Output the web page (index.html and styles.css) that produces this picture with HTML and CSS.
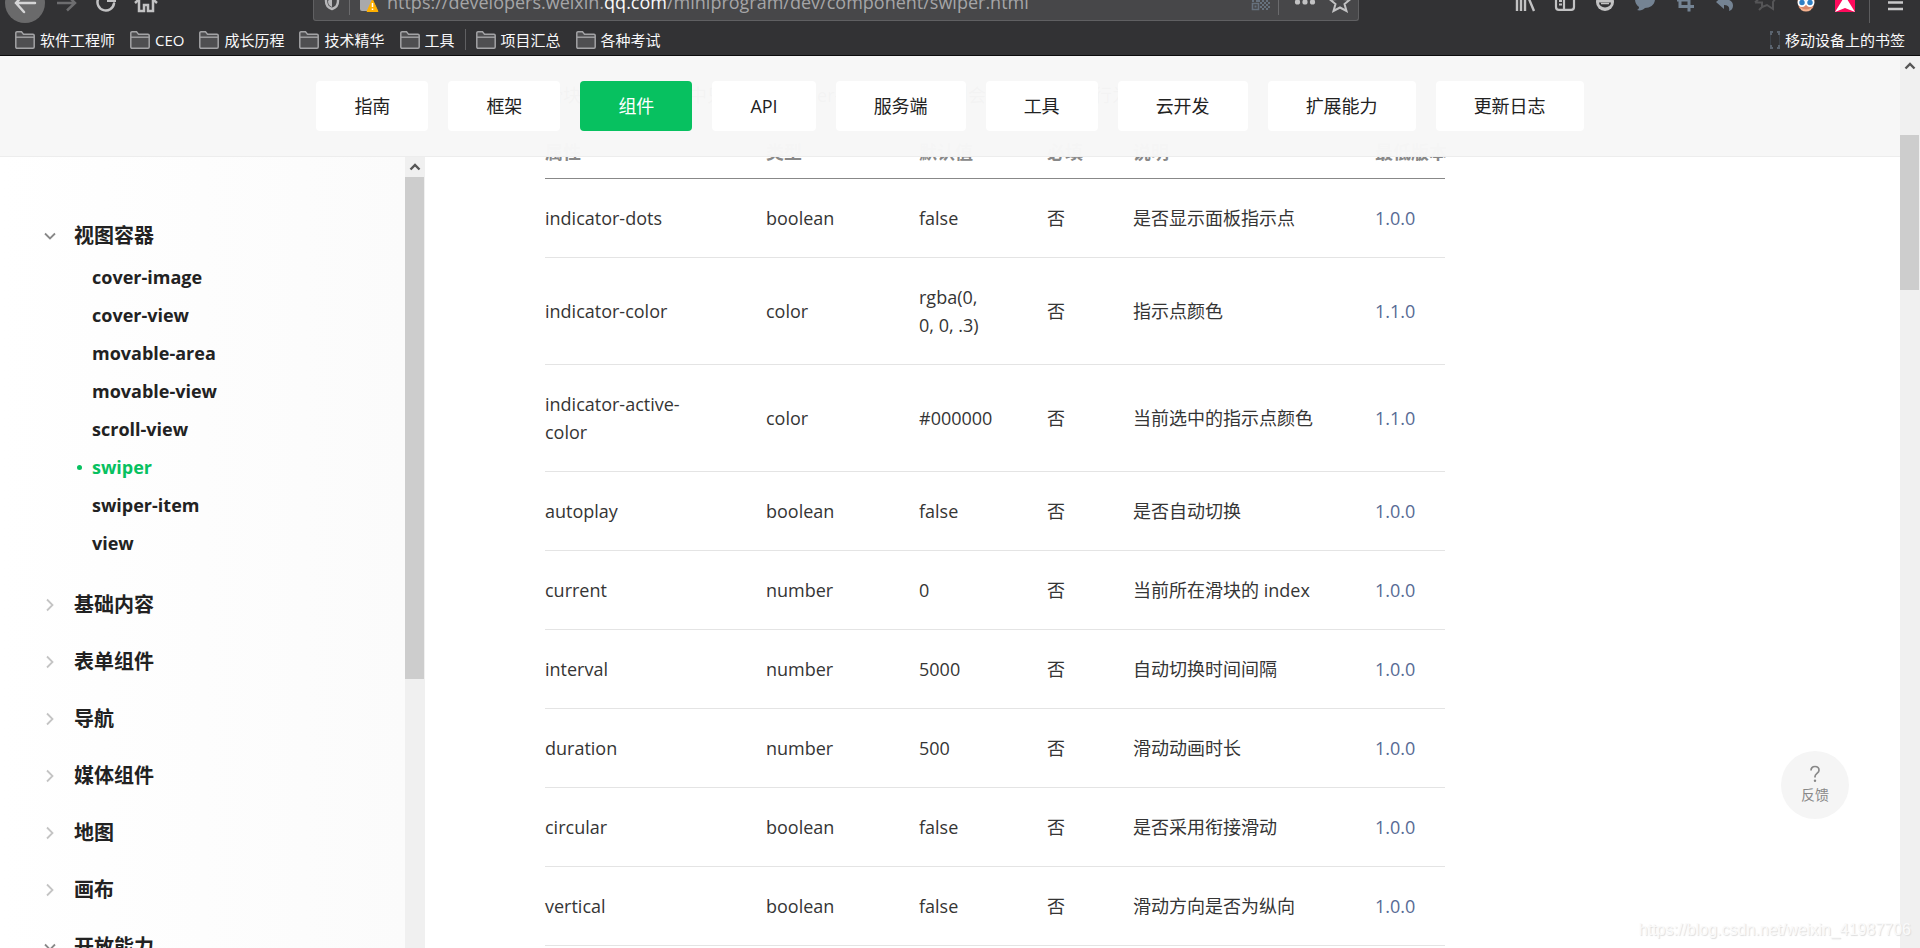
FILE: index.html
```html
<!DOCTYPE html>
<html lang="zh-CN">
    <head>
        <meta charset="utf-8">
        <title>swiper | 微信开放文档</title>
        <link rel="stylesheet" href="styles.css">
    </head>
    <body>
        <svg class="defs" width="0" height="0">
            <symbol id="folder" viewBox="0 0 20 18">
                <path d="M.8 3.5V2A1.2 1.2 0 0 1 2 .8h4.5l2 2.4H18a1.2 1.2 0 0 1 1.2 1.2V16a1.2 1.2 0 0 1-1.2 1.2H2A1.2 1.2 0 0 1 .8 16z" fill="#4f4f51" stroke="#a3a3a5" stroke-width="1.5"/>
                <path d="M1 6.2h18" stroke="#a3a3a5" stroke-width="1.4"/>
            </symbol>
            <symbol id="down" viewBox="0 0 14 14">
                <path d="M2 4.5l5 5 5-5" fill="none" stroke="#888" stroke-width="1.8"/>
            </symbol>
            <symbol id="right" viewBox="0 0 14 14">
                <path d="M4 1.5L9.500 7 4 12.500" fill="none" stroke="#c4c4c4" stroke-width="1.8"/>
            </symbol>
            <symbol id="up" viewBox="0 0 20 20">
                <path d="M5.500 12.500L10 8l4.500 4.500" fill="none" stroke="#555" stroke-width="2.400"/>
            </symbol>
        </svg>

        <header class="browser">
            <div class="toolbar">
                <button class="tool" aria-label="后退"><svg viewBox="0 0 40 24"><circle cx="20" cy="3" r="20" fill="#6a6a6b"/><path d="M30 3H11M19-6l-8 9 8 9" fill="none" stroke="#d5d5d6" stroke-width="2.500" stroke-linecap="round"/></svg></button>
                <button class="tool" aria-label="前进"><svg viewBox="0 0 40 24"><path d="M12 3h18M22-5l8 8-8 7.500" fill="none" stroke="#6d6d6f" stroke-width="2.500"/></svg></button>
                <button class="tool" aria-label="刷新"><svg viewBox="0 0 40 24"><path d="M29 3.500A8.300 8.300 0 1 1 25-5" fill="none" stroke="#c2c2c3" stroke-width="2.500" stroke-linecap="round"/><path d="M22-1h9v3h-9z" fill="#c2c2c3"/></svg></button>
                <button class="tool" aria-label="主页"><svg viewBox="0 0 40 24"><path d="M10 3l11-10L32 3" fill="none" stroke="#c2c2c3" stroke-width="2.500"/><path d="M14 0v11h5V5h4v6h5V0" fill="none" stroke="#c2c2c3" stroke-width="2.500"/></svg></button>
                <div class="urlbar">
                    <svg class="url-left" viewBox="0 0 66 20">
                        <path d="M12-6v7c0 4 2.500 7 6 8 3.500-1 6-4 6-8v-7" fill="none" stroke="#b8b8ba" stroke-width="2.400"/>
                        <path d="M18-4V7c-3-1-4-3-4-6" fill="#b8b8ba"/>
                        <path d="M35.500 0v15" stroke="#6b6b6d"/>
                        <path d="M46 0h12v11H48a2 2 0 0 1-2-2z" fill="#a9a9ab"/>
                        <path d="M58.500-.5L64 11.500H53z" fill="#ffb000" stroke="#ffb000" stroke-linejoin="round"/>
                        <path d="M58.500 3v4M58.500 8.500v1.500" stroke="#fff" stroke-width="1.500"/>
                    </svg>
                    <div class="url">https://developers.weixin.<b>qq.com</b>/miniprogram/dev/component/swiper.html</div>
                    <svg class="url-right" viewBox="0 0 110 20">
                        <path d="M4.500 3.500h6v6h-6z" fill="none" stroke="#66717d" stroke-width="1.600"/>
                        <path d="M6.500 5.500h2v2h-2zM4 0h2v2H4zM8 0h4v2H8zM12 2h2v2h-2zM14 0h2v2h-2zM16 2h2v2h-2zM18 0h2v2h-2zM20 2h2v2h-2zM14 4h2v2h-2zM18 4h2v2h-2zM12 6h2v2h-2zM16 6h2v2h-2zM20 6h2v2h-2zM14 8h2v2h-2zM18 8h2v2h-2z" fill="#66717d"/>
                        <path d="M30.500 0v15" stroke="#6b6b6d"/>
                        <circle cx="49.500" cy="2" r="2.600" fill="#c2c2c3"/><circle cx="57" cy="2" r="2.600" fill="#c2c2c3"/><circle cx="64.500" cy="2" r="2.600" fill="#c2c2c3"/>
                        <path d="M92-8l3 7 7 .5-5.500 4.500 2 7L92 7.500 85.500 11l2-7L82-.5l7-.5z" fill="none" stroke="#c2c2c3" stroke-width="2"/>
                    </svg>
                </div>
                <button class="tool" aria-label="书库"><svg viewBox="0 0 40 24"><path d="M12 0v11M16 0v11M20 0v11M24-1l5 12" stroke="#c2c2c3" stroke-width="2.400"/></svg></button>
                <button class="tool" aria-label="侧栏"><svg viewBox="0 0 40 24"><path d="M11-5V7q0 2.800 2.800 2.800h12.400Q29 9.800 29 7V-5M19 0v10M14 1h3M14 4.500h3" fill="none" stroke="#c2c2c3" stroke-width="2.200"/></svg></button>
                <button class="tool" aria-label="账户"><svg viewBox="0 0 40 24"><circle cx="20" cy="2" r="9" fill="#c2c2c3"/><path d="M14 2.500h12a6 5 0 0 1-12 0z" fill="#323234"/><path d="M16 3.500h8" stroke="#c2c2c3" stroke-width="1.500"/></svg></button>
                <button class="tool" aria-label="消息"><svg viewBox="0 0 40 24"><path d="M10-1h20c0 6-5 9-10 9-2 2-5 3-8 2 2-1 2-2 2-3-3-2-4-5-4-8z" fill="#748393"/></svg></button>
                <button class="tool" aria-label="截图"><svg viewBox="0 0 40 24"><path d="M15-3V6.500h14M12 0h12v11.500" fill="none" stroke="#748393" stroke-width="3"/></svg></button>
                <button class="tool" aria-label="撤销"><svg viewBox="0 0 40 24"><path d="M19-5v4c6 0 9 3 9 6.500 0 3-1.500 5-4 5.500 1-4-1-6-5-6v4l-8-7z" fill="#748393"/></svg></button>
                <button class="tool" aria-label="收藏"><svg viewBox="0 0 40 24"><path d="M10 2.500h7v4.500l-3 3M17 7l5-2 6 4V2l2-3M10 2.500l3-3" fill="none" stroke="#555557" stroke-width="2"/></svg></button>
                <button class="tool" aria-label="脚本"><svg viewBox="0 0 40 24"><path d="M12-2h18l-2 10q-7 5-14 0z" fill="#d9896a"/><path d="M15 7q6 5 12 0l-1 3q-5 3-10 0z" fill="#f6b28f"/><circle cx="17" cy="2.500" r="3.600" fill="#2f7fc4" stroke="#fff" stroke-width="1.700"/><circle cx="25" cy="2.500" r="3.600" fill="#2f7fc4" stroke="#fff" stroke-width="1.700"/></svg></button>
                <button class="tool" aria-label="扩展"><svg viewBox="0 0 40 24"><path d="M10 0h20v12H10z" fill="#ff0a5c"/><path d="M18-1h4l8 13-10-4-10 4z" fill="#fff"/></svg></button>
                <span class="tool-line"></span>
                <button class="tool menu" aria-label="菜单"><svg viewBox="0 0 50 24"><path d="M18 2.500h15M18 9h15" stroke="#c9c9ca" stroke-width="2.400"/></svg></button>
            </div>
            <nav class="bookmarks">
                <a href="#"><svg class="folder"><use href="#folder"/></svg>软件工程师</a>
                <a href="#"><svg class="folder"><use href="#folder"/></svg>CEO</a>
                <a href="#"><svg class="folder"><use href="#folder"/></svg>成长历程</a>
                <a href="#"><svg class="folder"><use href="#folder"/></svg>技术精华</a>
                <a href="#"><svg class="folder"><use href="#folder"/></svg>工具</a>
                <span class="bookmark-line"></span>
                <a href="#"><svg class="folder"><use href="#folder"/></svg>项目汇总</a>
                <a href="#"><svg class="folder"><use href="#folder"/></svg>各种考试</a>
                <a href="#" class="mobile"><svg class="phone" viewBox="0 0 10 18"><path d="M0 1h3M7 1h3M0 3h2M8 3h2M0 15h2M8 15h2M0 17h3M7 17h3" stroke="#6a7683" stroke-width="1.500"/><path d="M.5 4v10M9.500 4v10" stroke="#3d434a"/></svg>移动设备上的书签</a>
            </nav>
        </header>

        <div class="window">
            <div class="page">
                <nav class="topnav">
                    <a href="#">指南</a>
                    <a href="#">框架</a>
                    <a href="#" class="active">组件</a>
                    <a href="#">API</a>
                    <a href="#">服务端</a>
                    <a href="#">工具</a>
                    <a href="#">云开发</a>
                    <a href="#">扩展能力</a>
                    <a href="#">更新日志</a>
                </nav>
                <div class="layout">
                    <aside class="sidebar">
                        <div class="menu-list">
                            <div class="group">
                                <a href="#" class="title"><svg><use href="#down"/></svg>视图容器</a>
                                <ul>
                                    <li><a href="#">cover-image</a></li>
                                    <li><a href="#">cover-view</a></li>
                                    <li><a href="#">movable-area</a></li>
                                    <li><a href="#">movable-view</a></li>
                                    <li><a href="#">scroll-view</a></li>
                                    <li><a href="#" class="current">swiper</a></li>
                                    <li><a href="#">swiper-item</a></li>
                                    <li><a href="#">view</a></li>
                                </ul>
                            </div>
                            <div class="group"><a href="#" class="title"><svg><use href="#right"/></svg>基础内容</a></div>
                            <div class="group"><a href="#" class="title"><svg><use href="#right"/></svg>表单组件</a></div>
                            <div class="group"><a href="#" class="title"><svg><use href="#right"/></svg>导航</a></div>
                            <div class="group"><a href="#" class="title"><svg><use href="#right"/></svg>媒体组件</a></div>
                            <div class="group"><a href="#" class="title"><svg><use href="#right"/></svg>地图</a></div>
                            <div class="group"><a href="#" class="title"><svg><use href="#right"/></svg>画布</a></div>
                            <div class="group"><a href="#" class="title"><svg><use href="#down"/></svg>开放能力</a></div>
                        </div>
                        <div class="scrollbar">
                            <svg class="arrow"><use href="#up"/></svg>
                            <div class="thumb side-thumb"></div>
                        </div>
                    </aside>
                    <main class="content">
                        <p>滑块视图容器。其中只可放置swiper-item组件，否则会导致未定义的行为。</p>
                        <table>
                            <colgroup>
                                <col class="col-name"><col class="col-type"><col class="col-default"><col class="col-required"><col class="col-desc"><col class="col-version">
                            </colgroup>
                            <thead>
                                <tr><th>属性</th><th>类型</th><th>默认值</th><th>必填</th><th>说明</th><th>最低版本</th></tr>
                            </thead>
                            <tbody>
                                <tr><td>indicator-dots</td><td>boolean</td><td>false</td><td>否</td><td>是否显示面板指示点</td><td><a href="#">1.0.0</a></td></tr>
                                <tr><td>indicator-color</td><td>color</td><td>rgba(0, 0, 0, .3)</td><td>否</td><td>指示点颜色</td><td><a href="#">1.1.0</a></td></tr>
                                <tr><td>indicator-active-color</td><td>color</td><td>#000000</td><td>否</td><td>当前选中的指示点颜色</td><td><a href="#">1.1.0</a></td></tr>
                                <tr><td>autoplay</td><td>boolean</td><td>false</td><td>否</td><td>是否自动切换</td><td><a href="#">1.0.0</a></td></tr>
                                <tr><td>current</td><td>number</td><td>0</td><td>否</td><td>当前所在滑块的 index</td><td><a href="#">1.0.0</a></td></tr>
                                <tr><td>interval</td><td>number</td><td>5000</td><td>否</td><td>自动切换时间间隔</td><td><a href="#">1.0.0</a></td></tr>
                                <tr><td>duration</td><td>number</td><td>500</td><td>否</td><td>滑动动画时长</td><td><a href="#">1.0.0</a></td></tr>
                                <tr><td>circular</td><td>boolean</td><td>false</td><td>否</td><td>是否采用衔接滑动</td><td><a href="#">1.0.0</a></td></tr>
                                <tr><td>vertical</td><td>boolean</td><td>false</td><td>否</td><td>滑动方向是否为纵向</td><td><a href="#">1.0.0</a></td></tr>
                            </tbody>
                        </table>
                    </main>
                </div>
                <button class="feedback">
                    <svg viewBox="0 0 12 18"><path d="M2 5.500C2 3 3.500 1.500 6 1.500s4 1.500 4 3.700c0 3-4 3.300-4 6.300v1" fill="none" stroke="#888" stroke-width="1.700"/><circle cx="6" cy="15.800" r="1.200" fill="#888"/></svg>
                    反馈
                </button>
            </div>
            <div class="scrollbar page-scroll">
                <svg class="arrow"><use href="#up"/></svg>
                <div class="thumb page-thumb"></div>
            </div>
        </div>
        <div class="watermark">https://blog.csdn.net/weixin_41987706</div>
    </body>
</html>
```
FILE: styles.css
```css
* {
    box-sizing: border-box;
}

body {
    margin: 0;
    height: 100vh;
    overflow: hidden;
    display: flex;
    flex-direction: column;
    background: #fff;
    color: #353535;
    font: 18px/28px "Open Sans", "Noto Sans CJK SC", sans-serif;
}

a {
    text-decoration: none;
}

button {
    border: 0;
    padding: 0;
    background: none;
    font-family: inherit;
}

.defs {
    position: absolute;
}

/* browser chrome */

.browser {
    flex: none;
    background: #323234;
    border-bottom: 1px solid #0c0c0d;
}

.toolbar {
    display: flex;
    height: 24px;
    padding-left: 5px;
    overflow: hidden;
}

.tool {
    flex: none;
    width: 40px;
    height: 24px;
}

.tool svg {
    display: block;
    width: 100%;
    height: 24px;
}

.menu {
    width: 50px;
}

.tool-line {
    width: 1px;
    height: 23px;
    margin-left: 4px;
    background: #5c5c5e;
}

.urlbar {
    flex: 1;
    display: flex;
    height: 21px;
    margin: 0 146px 0 148px;
    background: #474749;
    border: 1px solid #606062;
    border-top: 0;
    border-radius: 0 0 3px 3px;
}

.url-left {
    width: 66px;
    height: 20px;
}

.url {
    flex: 1;
    height: 20px;
    padding-left: 7px;
    color: #a5a5a7;
    line-height: 4px;
    white-space: nowrap;
}

.url b {
    color: #f9f9fa;
    font-weight: normal;
}

.url-right {
    width: 110px;
    height: 20px;
}

.bookmarks {
    display: flex;
    align-items: center;
    gap: 15px;
    height: 31px;
    padding: 0 15px;
}

.bookmarks a {
    display: flex;
    align-items: center;
    gap: 5px;
    color: #f9f9fa;
    font-size: 15px;
    line-height: 20px;
}

.folder {
    width: 20px;
    height: 18px;
}

.bookmark-line {
    width: 1px;
    height: 21px;
    margin: 0 -5px;
    background: #606062;
}

.bookmarks .mobile {
    margin-left: auto;
}

.phone {
    width: 10px;
    height: 18px;
}

/* page */

.window {
    flex: 1;
    min-height: 0;
    display: flex;
}

.page {
    flex: 1;
    position: relative;
    display: flex;
    flex-direction: column;
    overflow: hidden;
}

.topnav {
    flex: none;
    position: relative;
    z-index: 2;
    display: flex;
    justify-content: center;
    gap: 20px;
    padding: 25px 0;
    background: rgba(247, 247, 247, .98);
    border-bottom: 1px solid #ededed;
}

.topnav a {
    padding: 0 38px;
    border-radius: 4px;
    background: #fff;
    color: #222;
    line-height: 50px;
}

.topnav .active {
    background: #07c160;
    color: #fff;
}

.layout {
    flex: 1;
    min-height: 0;
    display: flex;
}

.sidebar {
    flex: none;
    width: 425px;
    display: flex;
    overflow: hidden;
}

.menu-list {
    flex: 1;
    padding: 60px 0 0 43px;
    background: linear-gradient(to right, #fff, #fbfbfb);
}

.group {
    margin-bottom: 19px;
}

.title {
    display: flex;
    align-items: center;
    gap: 17px;
    color: #222;
    font-size: 20px;
    font-weight: bold;
    line-height: 38px;
}

.title svg {
    width: 14px;
    height: 14px;
}

.group ul {
    margin: 0;
    padding: 3px 0 5px 49px;
    list-style: none;
}

.group li a {
    position: relative;
    display: block;
    color: #222;
    font-weight: bold;
    line-height: 38px;
}

.group li .current {
    color: #07c160;
}

.current:before {
    content: "";
    position: absolute;
    left: -15px;
    top: 17px;
    width: 5px;
    height: 5px;
    border-radius: 50%;
    background: #07c160;
}

.scrollbar {
    flex: none;
    width: 20px;
    padding-right: 1px;
    background: #f0f0f0;
}

.arrow {
    display: block;
    width: 20px;
    height: 20px;
}

.thumb {
    background: #cdcdcd;
}

.side-thumb {
    height: 502px;
}

.page-thumb {
    height: 155px;
    margin-top: 59px;
}

/* the doc is scrolled, its top runs under the nav */
.content {
    flex: 1;
    margin-top: -101px;
    padding: 25px 120px 0;
}

.content p {
    margin: 0 0 17px;
}

.content table {
    width: 900px;
    table-layout: fixed;
    border-collapse: separate;
    border-spacing: 0;
}

.col-name { width: 221px; }
.col-type { width: 153px; }
.col-default { width: 128px; }
.col-required { width: 86px; }
.col-desc { width: 242px; }
.col-version { width: 70px; }

.content th {
    padding: 12px 0;
    border-bottom: 1px solid #888;
    color: #888;
    text-align: left;
    white-space: nowrap;
}

.content td {
    padding: 25px 52px 25px 0;
    border-bottom: 1px solid #e4e4e4;
}

.content td:last-child {
    padding-right: 0;
}

.content td a {
    color: #576b95;
}

.feedback {
    position: absolute;
    right: 51px;
    bottom: 129px;
    display: flex;
    flex-direction: column;
    align-items: center;
    justify-content: center;
    width: 68px;
    height: 68px;
    border-radius: 50%;
    background: #f5f5f5;
    color: #888;
    font-size: 14px;
    line-height: 20px;
}

.feedback svg {
    width: 12px;
    height: 18px;
    margin-bottom: 2px;
}

.watermark {
    position: absolute;
    right: 9px;
    bottom: 7px;
    color: #fafafa;
    font: 16px/22px "Liberation Sans", sans-serif;
    text-shadow: 1px 1px 1px #ddd;
}
```
